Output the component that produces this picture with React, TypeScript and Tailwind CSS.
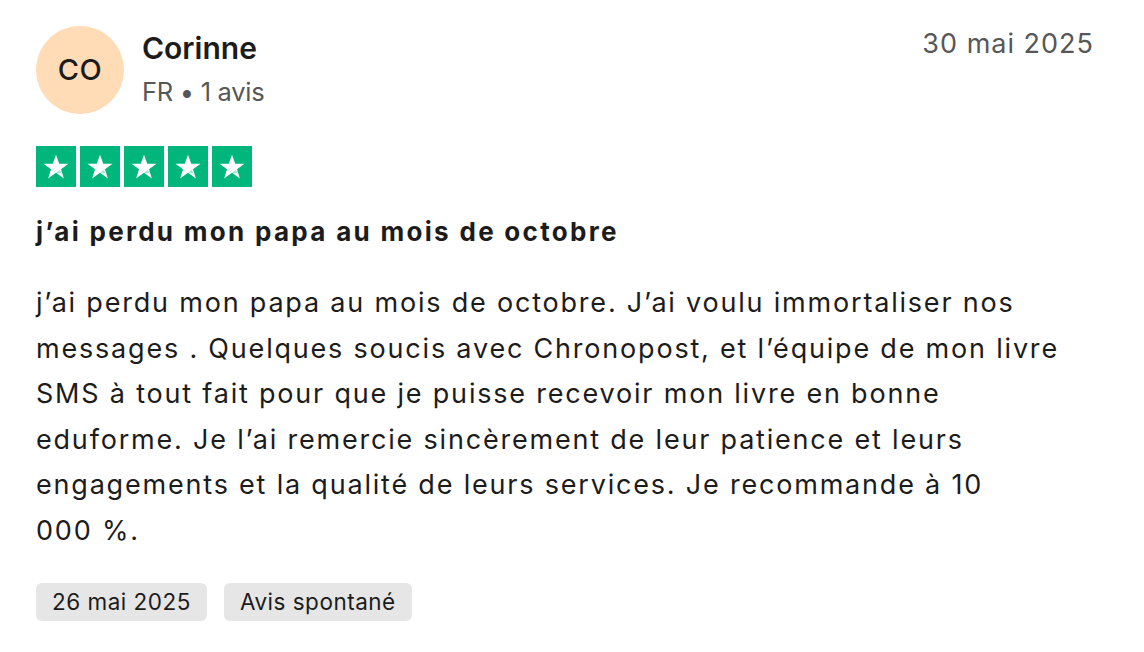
import React from "react";

function Star() {
  return (
    <div className="w-[40px] h-[41px] bg-[#00b67a] flex items-center justify-center">
      <svg width="30" height="30" viewBox="0 0 24 24">
        <path
          d="M12 2.2l2.6 7.1h7.4l-6 4.5 2.3 7.3L12 16.6l-6.3 4.5 2.3-7.3-6-4.5h7.4z"
          fill="#ffffff"
        />
        <path d="M15.3 14.2l0.9 3-4.2-0.6z" fill="#00b67a" opacity="0.35" />
      </svg>
    </div>
  );
}

const lines = [
  "j’ai perdu mon papa au mois de octobre. J’ai voulu immortaliser nos",
  "messages . Quelques soucis avec Chronopost, et l’équipe de mon livre",
  "SMS à tout fait pour que je puisse recevoir mon livre en bonne",
  "eduforme. Je l’ai remercie sincèrement de leur patience et leurs",
  "engagements et la qualité de leurs services. Je recommande à 10",
  "000 %.",
];

export default function App() {
  return (
    <div
      className="w-[1144px] h-[652px] bg-white text-[#1c1c1c] pl-[36px] pr-[50px] pt-[26px]"
      style={{ fontFamily: "Inter, 'Noto Sans', sans-serif" }}
    >
      <div className="flex items-start justify-between h-[88px]">
        <div className="flex items-center">
          <div className="w-[88px] h-[88px] rounded-full bg-[#ffdcb5] flex items-center justify-center text-[29px] font-medium tracking-[0.5px]">
            CO
          </div>
          <div className="ml-[18px] flex flex-col">
            <div className="text-[30px] font-semibold leading-[44px]">Corinne</div>
            <div className="text-[25.5px] leading-[44px] text-[#575757] tracking-[-0.3px]">
              FR • 1 avis
            </div>
          </div>
        </div>
        <div className="text-[27px] leading-[36px] text-[#575757] tracking-[1px]">
          30 mai 2025
        </div>
      </div>

      <div className="mt-[32px] flex gap-[4px]">
        <Star />
        <Star />
        <Star />
        <Star />
        <Star />
      </div>

      <h2 className="mt-[28px] text-[26px] leading-[34px] font-bold tracking-[2.3px]">
        j’ai perdu mon papa au mois de octobre
      </h2>

      <p className="mt-[31px] text-[27px] leading-[45.5px] tracking-[1.8px]">
        {lines.map((l, i) => (
          <React.Fragment key={i}>
            {l}
            {i < lines.length - 1 && <br />}
          </React.Fragment>
        ))}
      </p>

      <div className="mt-[30px] flex gap-[17px]">
        <span className="h-[38px] px-[16px] rounded-[6px] bg-[#e6e6e6] text-[22.5px] leading-[38px] tracking-[0.5px]">
          26 mai 2025
        </span>
        <span className="h-[38px] px-[16px] rounded-[6px] bg-[#e6e6e6] text-[22.5px] leading-[38px] tracking-[0.5px]">
          Avis spontané
        </span>
      </div>
    </div>
  );
}
